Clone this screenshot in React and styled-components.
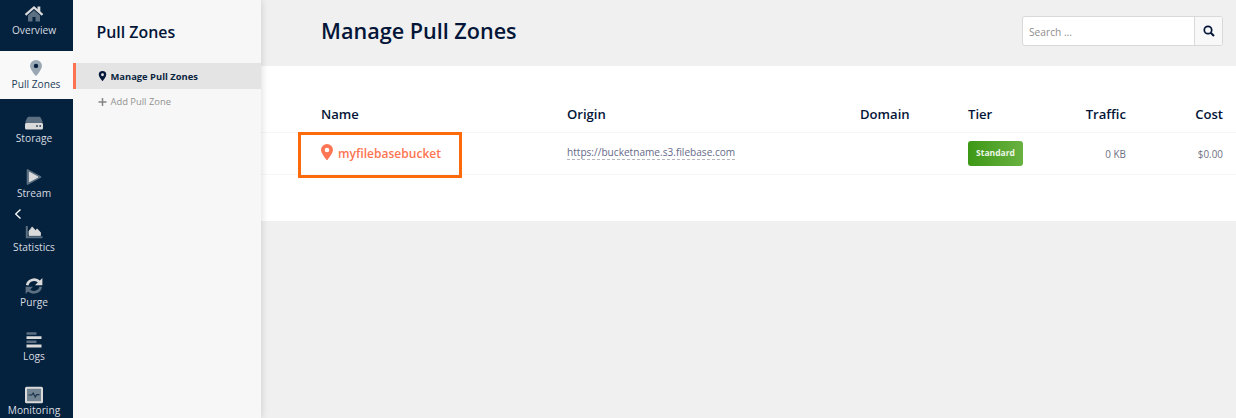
import React from "react";
import styled, { createGlobalStyle, css } from "styled-components";

const GlobalStyle = createGlobalStyle`
  * { box-sizing: border-box; }
  body {
    margin: 0;
    background: #f0f0f0;
    font-family: "Open Sans", "Noto Sans", sans-serif;
    color: #041538;
    overflow: hidden;
  }
`;

const Page = styled.div`
  display: flex;
  height: 418px;
  overflow: hidden;
`;

const Sidebar = styled.nav`
  position: relative;
  flex: 0 0 73px;
  background: #04213d;
  display: flex;
  flex-direction: column;
  gap: 6.4px;
  overflow: hidden;
`;

const NavItem = styled.a`
  flex: 0 0 48px;
  width: ${(p) => (p.$active ? "73px" : "68px")};
  padding-top: 8.6px;
  display: flex;
  flex-direction: column;
  align-items: center;
  color: #d8dce0;
  ${(p) => p.$first && css`margin-top: -3.6px;`}
  ${(p) =>
    p.$active &&
    css`
      padding-right: 1px;
      background: #f9f9f9;
      color: #1d4059;
    `}
`;

const NavIcon = styled.svg`
  display: block;
  width: 20px;
  height: 18px;
`;

const NavLabel = styled.span`
  margin-top: -0.4px;
  font-size: 10.2px;
  line-height: 14px;
  white-space: nowrap;
`;

const Collapse = styled.svg`
  position: absolute;
  left: 14px;
  top: 208px;
  width: 8px;
  height: 12px;
`;

const Panel = styled.aside`
  position: relative;
  z-index: 1;
  flex: 0 0 188px;
  background: #f7f7f7;
  box-shadow: 0 0 8px rgba(0, 0, 0, 0.16);
  clip-path: inset(0 -14px 0 0);
`;

const PanelTitle = styled.h2`
  margin: 0;
  height: 63px;
  padding: 20px 0 0 23.5px;
  font-size: 15.9px;
  line-height: 24px;
  font-weight: 600;
`;

const PanelLink = styled.a`
  display: flex;
  align-items: center;
  height: ${(p) => (p.$active ? "26px" : "25px")};
  gap: 3.5px;
  padding-left: 22px;
  border-left: 3px solid ${(p) => (p.$active ? "#fb7350" : "transparent")};
  background: ${(p) => (p.$active ? "#e4e4e4" : "transparent")};
  color: ${(p) => (p.$active ? "#0b2440" : "#929292")};
  font-size: 9.4px;
  font-weight: ${(p) => (p.$active ? 700 : 400)};
  white-space: nowrap;
`;

const LinkIcon = styled.svg`
  width: 9px;
  height: 10px;
`;

const Main = styled.main`
  flex: 1;
  min-width: 0;
`;

const Header = styled.header`
  height: 66px;
  padding: 0 13px 0 60px;
  display: flex;
  justify-content: space-between;
`;

const Title = styled.h1`
  margin: 16px 0 0;
  font-size: 21.6px;
  line-height: 30px;
  font-weight: 600;
  white-space: nowrap;
`;

const Search = styled.div`
  margin-top: 16px;
  width: 201px;
  height: 30px;
  display: flex;
  border: 1px solid #d9d9d9;
  border-radius: 3px;
  background: #fff;
  overflow: hidden;
`;

const SearchField = styled.span`
  flex: 1;
  padding-left: 6px;
  font-size: 10.2px;
  line-height: 30px;
  color: #8e8e8e;
`;

const SearchButton = styled.span`
  flex: 0 0 28px;
  display: flex;
  align-items: center;
  justify-content: center;
  border-left: 1px solid #d9d9d9;
  background: #f8f8f8;
`;

const Content = styled.section`
  height: 155px;
  padding-top: 28px;
  background: #fff;
`;

const Row = styled.div`
  display: grid;
  grid-template-columns: 246px 293px 108px 80px 78px 97px;
  align-items: center;
  height: ${(p) => (p.$head ? "39px" : "42px")};
  padding-left: 60px;
  border-bottom: 1px solid #f7f7f7;
`;

const HeadCell = styled.span`
  padding-top: 2px;
  font-size: 13.1px;
  font-weight: 600;
  line-height: 18px;
  text-align: ${(p) => (p.$right ? "right" : "left")};
`;

const ValueCell = styled.span`
  font-size: 9.9px;
  line-height: 16px;
  color: #6d7184;
  text-align: right;
`;

const NameCell = styled.div`
  position: relative;
  display: flex;
  align-items: center;
  gap: 5px;
  color: #fd7552;
  font-size: 12.05px;
  font-weight: 600;
  line-height: 18px;
`;

const NamePin = styled.svg`
  width: 12px;
  height: 16px;
  margin-bottom: 3px;
`;

const Highlight = styled.div`
  position: absolute;
  left: -23px;
  top: -12px;
  width: 164px;
  height: 46px;
  border: 3px solid #fd6a0c;
`;

const Origin = styled.a`
  justify-self: start;
  margin-bottom: 2px;
  font-size: 10.1px;
  line-height: 13px;
  color: #66698a;
  border-bottom: 1px dashed #b5b5bb;
`;

const Badge = styled.span`
  justify-self: start;
  width: 55px;
  height: 25px;
  border-radius: 3px;
  background: linear-gradient(90deg, #3d9816, #69b141);
  color: #edf7e6;
  font-size: 8.5px;
  font-weight: 700;
  line-height: 24px;
  text-align: center;
`;

const PIN =
  "M6 0a6 6 0 0 1 6 6c0 2.7-3.8 7.6-5.4 9.7a.75.75 0 0 1-1.2 0C3.800 13.600 0 8.700 0 6a6 6 0 0 1 6-6zm0 3.700a2.300 2.300 0 1 0 0 4.600 2.300 2.300 0 0 0 0-4.600z";

const NAV = [
  {
    label: "Overview",
    icon: (
      <>
        <path d="M4 10.500 10 5.300l6 5.200V16.500h-4.500V12h-3v4.500H4z" fill="#5c7082" />
        <path d="M1.500 9.800 10 2.400l8.500 7.400" fill="none" stroke="#dadada" strokeWidth="2.300" />
        <path d="M13.500 1.500H16.300v6L13.500 4.800z" fill="#dadada" />
      </>
    ),
  },
  {
    label: "Pull Zones",
    active: true,
    icon: (
      <>
        <path transform="translate(4 .9)" d="M6 0a6 6 0 0 1 6 6c0 2.700-3.800 7.600-5.400 9.700a.75.75 0 0 1-1.200 0C3.800 13.600 0 8.700 0 6a6 6 0 0 1 6-6z" fill="#9aa8b3" />
        <circle cx="10" cy="6.900" r="2.200" fill="#061f40" />
      </>
    ),
  },
  {
    label: "Storage",
    icon: (
      <>
        <path d="M5 2.800h10q1.200 0 1.800 1L19 8.500H1l2.200-4.700q.6-1 1.800-1z" fill="#5c7082" />
        <rect x="1" y="8.800" width="18" height="6.800" rx="1.500" fill="#dadada" />
        <circle cx="13" cy="12" r=".9" fill="#304559" />
        <circle cx="16.200" cy="12" r=".9" fill="#304559" />
      </>
    ),
  },
  {
    label: "Stream",
    icon: (
      <>
        <path d="M3.500 1.900 16.500 9 3.500 16.100z" fill="#5c7082" stroke="#5c7082" strokeWidth="1.600" strokeLinejoin="round" />
        <path d="M5.400 4.300 14 9l-8.600 4.700z" fill="#dadada" stroke="#dadada" strokeLinejoin="round" />
      </>
    ),
  },
  {
    label: "Statistics",
    icon: (
      <>
        <path d="M2.800 3v11.200h15.700" fill="none" stroke="#5c7082" strokeWidth="2" />
        <path d="M5 12.500V8.200l3.200-4.300 3.100 3.500 1.900-1.500 3.300 3.600v3z" fill="#dadada" stroke="#dadada" strokeWidth=".8" strokeLinejoin="round" />
      </>
    ),
  },
  {
    label: "Purge",
    icon: (
      <>
        <path d="M3.200 8.200A7 6.600 0 0 1 15.400 5" fill="none" stroke="#dadada" strokeWidth="2.700" />
        <path d="M18.400 1v7.300h-7.500z" fill="#dadada" />
        <path d="M16.800 9.800A7 6.600 0 0 1 4.600 13" fill="none" stroke="#5c7082" strokeWidth="2.700" />
        <path d="M1.600 17V9.700h7.500z" fill="#5c7082" />
      </>
    ),
  },
  {
    label: "Logs",
    icon: (
      <>
        <path d="M2.500 2.500h10M2.500 10.700h10" stroke="#5c7082" strokeWidth="2.600" />
        <path d="M2.500 6.700h15M2.500 15h15" stroke="#dadada" strokeWidth="2.800" />
      </>
    ),
  },
  {
    label: "Monitoring",
    icon: (
      <>
        <rect x="2" y="1.700" width="16" height="14.600" rx=".6" fill="#728391" stroke="#dadada" strokeWidth="2" />
        <path d="M4.500 9h3.200l1.500-1.900 2 4 1.500-2.400h2.800" fill="none" stroke="#19354e" strokeWidth="1.200" />
      </>
    ),
  },
];

export default function App() {
  return (
    <>
      <GlobalStyle />
      <Page>
        <Sidebar>
          {NAV.map((item, i) => (
            <NavItem key={item.label} $active={item.active} $first={i === 0}>
              <NavIcon viewBox="0 0 20 18">{item.icon}</NavIcon>
              <NavLabel>{item.label}</NavLabel>
            </NavItem>
          ))}
          <Collapse viewBox="0 0 8 12">
            <path d="M6.500 1.500 1.700 6l4.800 4.500" fill="none" stroke="#fff" strokeWidth="1.300" />
          </Collapse>
        </Sidebar>

        <Panel>
          <PanelTitle>Pull Zones</PanelTitle>
          <PanelLink $active>
            <LinkIcon viewBox="-1.200 0 14.400 16">
              <path d={PIN} fill="#04173a" />
            </LinkIcon>
            Manage Pull Zones
          </PanelLink>
          <PanelLink>
            <LinkIcon viewBox="0 0 9 10">
              <path d="M4.500 1v8M.5 5h8" stroke="#858585" strokeWidth="1.500" />
            </LinkIcon>
            Add Pull Zone
          </PanelLink>
        </Panel>

        <Main>
          <Header>
            <Title>Manage Pull Zones</Title>
            <Search>
              <SearchField>Search ...</SearchField>
              <SearchButton>
                <svg width="12" height="12" viewBox="0 0 12 12">
                  <circle cx="5" cy="5" r="3.700" fill="none" stroke="#041538" strokeWidth="1.700" />
                  <path d="m7.700 7.700 3.300 3.300" stroke="#041538" strokeWidth="2" />
                </svg>
              </SearchButton>
            </Search>
          </Header>
          <Content>
            <Row $head>
              <HeadCell>Name</HeadCell>
              <HeadCell>Origin</HeadCell>
              <HeadCell>Domain</HeadCell>
              <HeadCell>Tier</HeadCell>
              <HeadCell $right>Traffic</HeadCell>
              <HeadCell $right>Cost</HeadCell>
            </Row>
            <Row>
              <NameCell>
                <NamePin viewBox="0 0 12 16">
                  <path d={PIN} fill="#fd7552" />
                </NamePin>
                myfilebasebucket
                <Highlight />
              </NameCell>
              <Origin>https://bucketname.s3.filebase.com</Origin>
              <span />
              <Badge>Standard</Badge>
              <ValueCell>0 KB</ValueCell>
              <ValueCell>$0.00</ValueCell>
            </Row>
          </Content>
        </Main>
      </Page>
    </>
  );
}
